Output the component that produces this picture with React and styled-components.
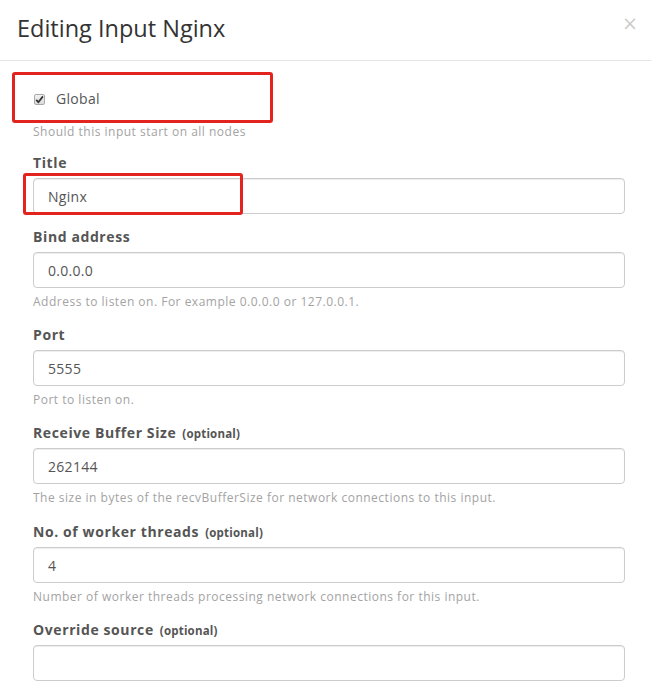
import React from "react";
import styled, { createGlobalStyle } from "styled-components";

const GlobalStyle = createGlobalStyle`
  html, body {
    margin: 0;
    padding: 0;
    background: #fff;
  }
  body {
    font-family: "Open Sans", "DejaVu Sans", sans-serif;
    font-size: 14px;
    line-height: 1.42857;
    color: #555;
  }
  * { box-sizing: border-box; }
`;

const Modal = styled.div`
  position: relative;
  width: 651px;
  height: 686px;
  overflow: hidden;
  background: #fff;
`;

const Header = styled.div`
  display: flex;
  align-items: flex-start;
  justify-content: space-between;
  padding: 13px 13px 17px 17px;
  border-bottom: 1px solid #e5e5e5;
`;

const Title = styled.h4`
  margin: 0;
  font-size: 23.5px;
  line-height: 30px;
  font-weight: 400;
  color: #333;
`;

const Close = styled.button`
  border: 0;
  background: none;
  padding: 0;
  margin-top: -2px;
  font-family: "DejaVu Sans", sans-serif;
  font-size: 19px;
  line-height: 24px;
  color: #000;
  opacity: 0.2;
  cursor: pointer;
`;

const Body = styled.div`
  padding: 28px 26px 0 33px;
`;

const CheckRow = styled.label`
  display: flex;
  align-items: center;
  gap: 11px;
  height: 20px;
  padding-left: 1px;
  font-size: 14px;
  letter-spacing: 0.3px;
  color: #555;
`;

const CheckBox = styled.span`
  display: inline-flex;
  align-items: center;
  justify-content: center;
  width: 11px;
  height: 11px;
  border: 1px solid #a9a9a9;
  border-radius: 2px;
  background: linear-gradient(#f2f2f2, #dcdcdc);
`;

const Group = styled.div`
  margin-bottom: ${(p) => p.$gap || 15}px;
`;

const Label = styled.label`
  display: block;
  height: 20px;
  margin-bottom: 5px;
  font-weight: 700;
  font-size: 14px;
  line-height: 20px;
  letter-spacing: 0.6px;
  color: #555;
`;

const Optional = styled.small`
  font-size: 11.5px;
  line-height: 1;
  font-weight: 700;
  letter-spacing: 0.2px;
  margin-left: 6px;
`;

const Input = styled.input`
  display: block;
  width: 100%;
  height: 36px;
  padding: 6px 14px;
  font-family: inherit;
  font-size: 14px;
  letter-spacing: 0.3px;
  color: #555;
  background: #fff;
  border: 1px solid #ccc;
  border-radius: 4px;
  box-shadow: inset 0 1px 1px rgba(0, 0, 0, 0.075);
  outline: none;
`;

const Help = styled.span`
  display: block;
  margin-top: ${(p) => p.$top || 5}px;
  font-size: 12px;
  line-height: 17px;
  letter-spacing: 0.5px;
  color: #a3a3a3;
`;

const Mark = styled.div`
  position: absolute;
  left: ${(p) => p.$x}px;
  top: ${(p) => p.$y}px;
  width: ${(p) => p.$w}px;
  height: ${(p) => p.$h}px;
  border: 3px solid #e3231e;
  border-radius: 3px;
  pointer-events: none;
`;

const fields = [
  { label: "Bind address", value: "0.0.0.0", help: "Address to listen on. For example 0.0.0.0 or 127.0.0.1." },
  { label: "Port", value: "5555", help: "Port to listen on." },
  {
    label: "Receive Buffer Size",
    optional: true,
    value: "262144",
    help: "The size in bytes of the recvBufferSize for network connections to this input.",
    gap: 16,
  },
  {
    label: "No. of worker threads",
    optional: true,
    value: "4",
    help: "Number of worker threads processing network connections for this input.",
  },
  { label: "Override source", optional: true, value: "" },
];

export default function App() {
  return (
    <Modal>
      <GlobalStyle />
      <Header>
        <Title>Editing Input Nginx</Title>
        <Close type="button">×</Close>
      </Header>
      <Body>
        <Group $gap={13}>
          <CheckRow>
            <CheckBox>
              <svg width="9" height="9" viewBox="0 0 9 9">
                <path d="M1.2 4.8 L3.4 7.2 L7.9 1.4" fill="none" stroke="#333" strokeWidth="1.8" />
              </svg>
            </CheckBox>
            Global
          </CheckRow>
          <Help $top={14}>Should this input start on all nodes</Help>
        </Group>
        <Group $gap={13}>
          <Label>Title</Label>
          <Input defaultValue="Nginx" readOnly />
        </Group>
        {fields.map((f) => (
          <Group key={f.label} $gap={f.gap}>
            <Label>
              {f.label}
              {f.optional && <Optional>(optional)</Optional>}
            </Label>
            <Input defaultValue={f.value} readOnly />
            {f.help && <Help>{f.help}</Help>}
          </Group>
        ))}
      </Body>
      <Mark $x={12} $y={72} $w={261} $h={51} />
      <Mark $x={23} $y={173} $w={220} $h={42} />
    </Modal>
  );
}
